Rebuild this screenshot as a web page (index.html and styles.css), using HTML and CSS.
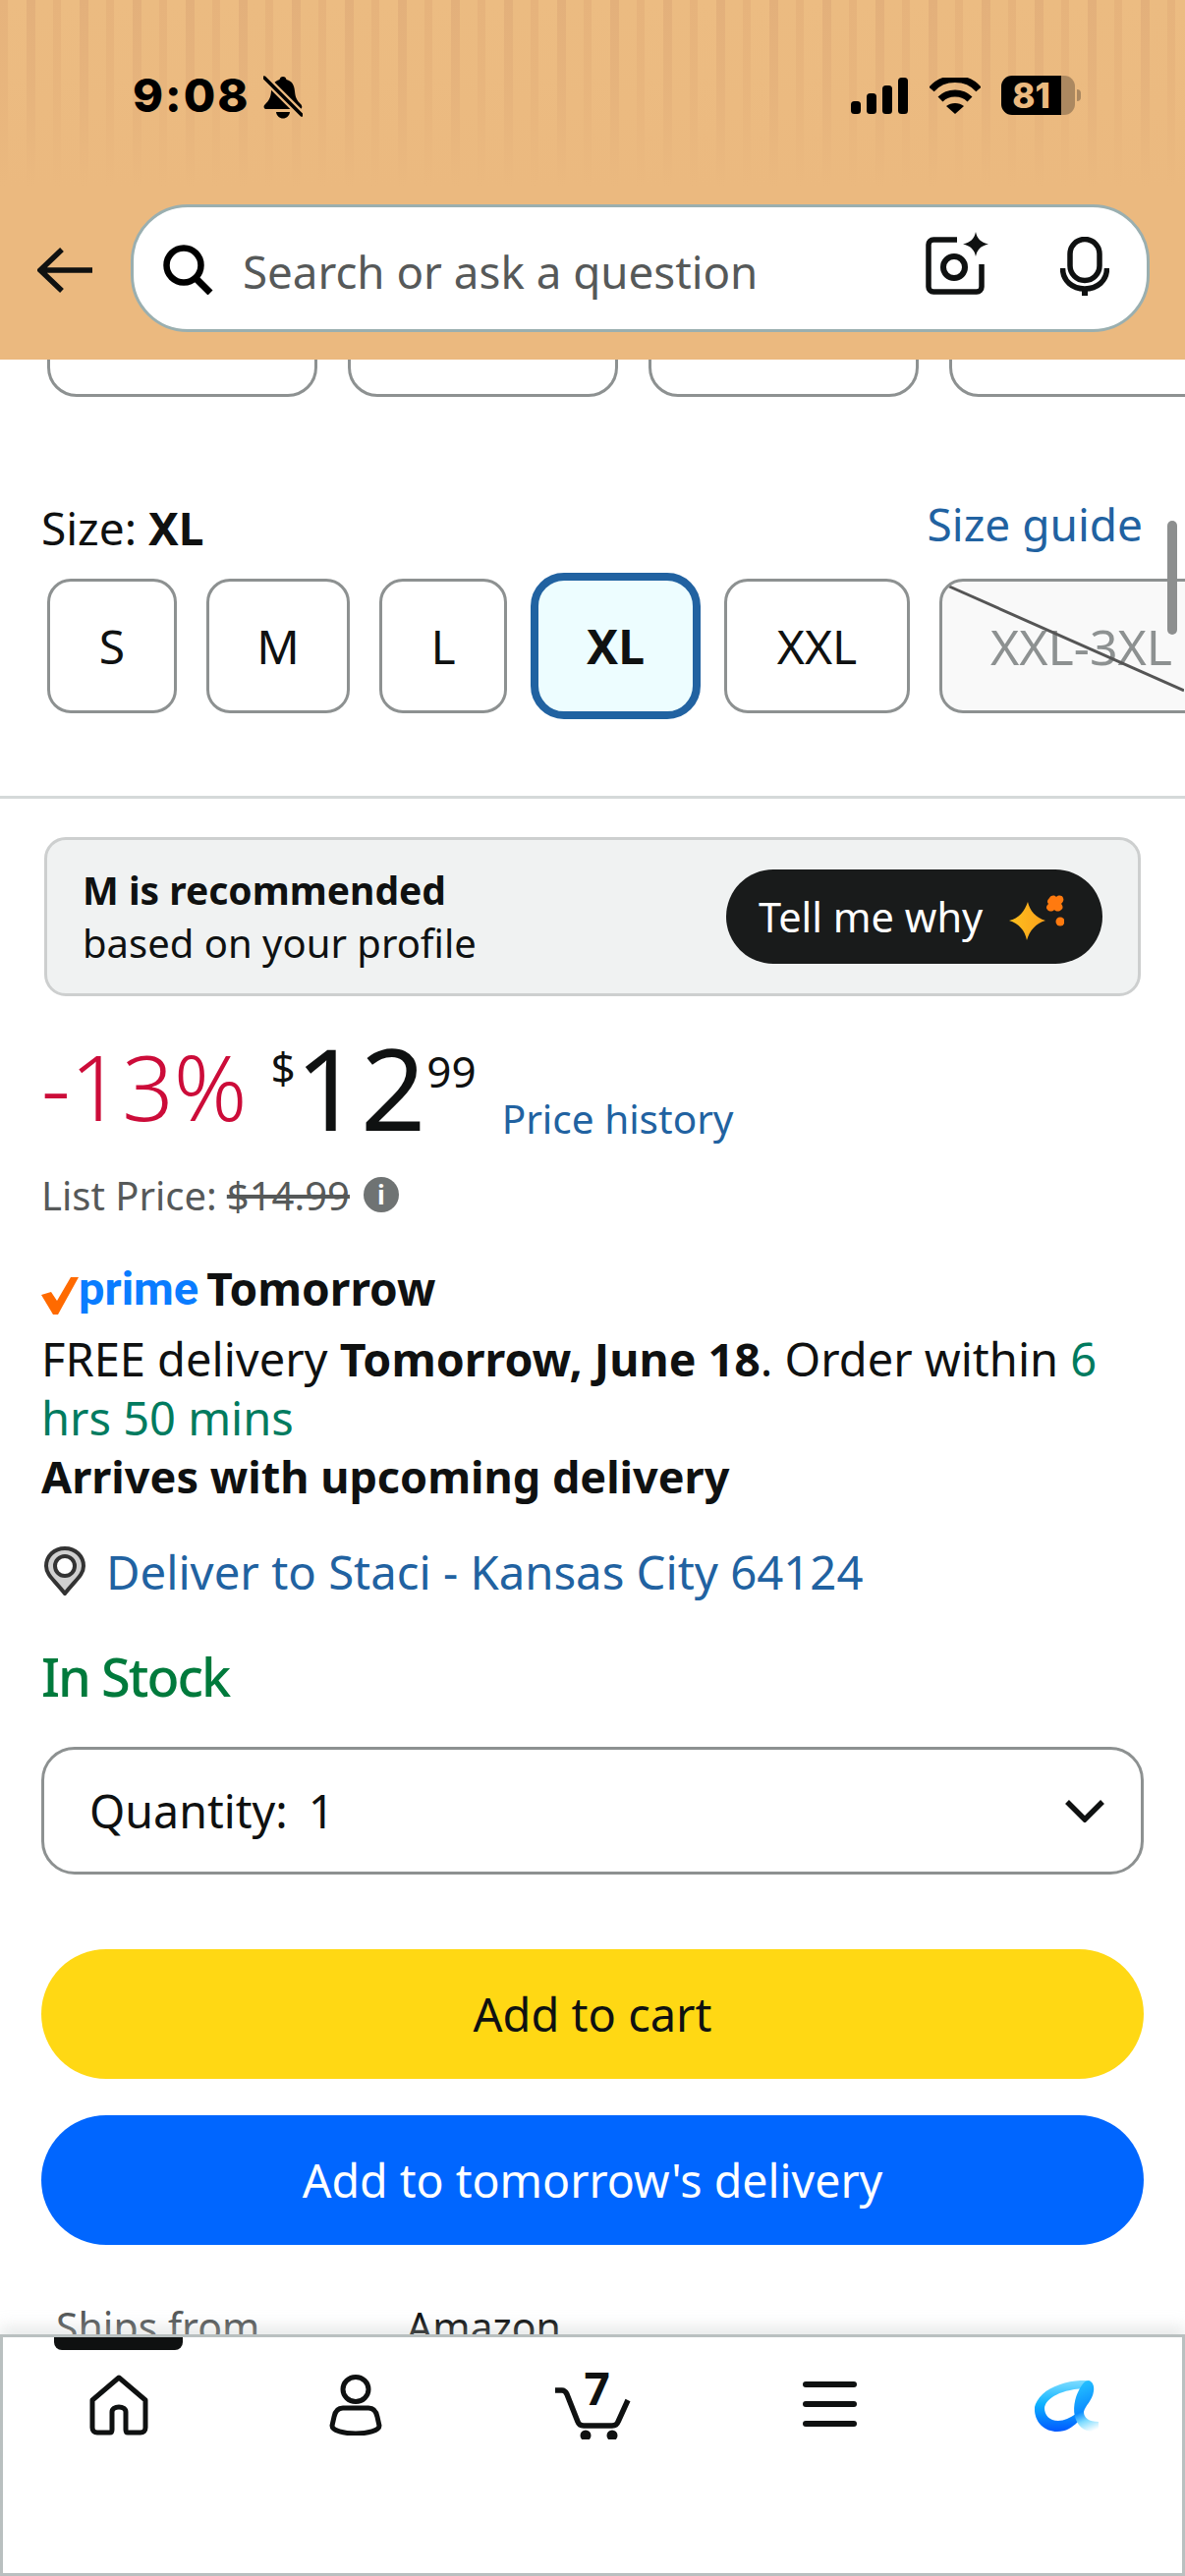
FILE: index.html
```html
<!DOCTYPE html>
<html lang="en">
<head>
<meta charset="utf-8">
<title>Product</title>
<link rel="stylesheet" href="styles.css">
</head>
<body>
<div class="phone">
  <header class="header">
    <div class="status">
      <div class="status-left">
        <span class="time">9:08</span>
        <svg class="bell" viewBox="0 0 40 44"><path d="M20 1c2 0 3 1 3.500 3 6 1.500 8 6 8.500 12 .5 6 2 9 6 13 1.500 1.500 2 4 0 5H2c-2-1-2-3.500 0-5 4-4 5.500-7 6-13 .5-6 3-10.500 8.500-12C17 2 18 1 20 1z"/><path d="M13 37h14c-.5 4-3.500 6.500-7 6.500S13.500 41 13 37z"/><path d="M0 1l40 40" stroke="#ebb97f" stroke-width="8"/><path d="M1 2l38 38" stroke="#000" stroke-width="3.500" stroke-linecap="round"/></svg>
      </div>
      <div class="status-right">
        <svg class="signal" viewBox="0 0 58 37"><rect x="0" y="24" width="10" height="13" rx="3.500"/><rect x="16" y="16" width="10" height="21" rx="3.500"/><rect x="32" y="8" width="10" height="29" rx="3.500"/><rect x="48" y="0" width="10" height="37" rx="3.500"/></svg>
        <svg class="wifi" viewBox="0 0 52 37"><path d="M2 12C14 -2 38 -2 50 12" fill="none" stroke="#000" stroke-width="7"/><path d="M11 22c8-8 22-8 30 0" fill="none" stroke="#000" stroke-width="7"/><path d="M17 29c5-4 13-4 18 0l-9 8z"/></svg>
        <div class="battery"><span class="battery-fill">81</span><span class="battery-rest"></span><span class="battery-nub"></span></div>
      </div>
    </div>
    <div class="searchrow">
      <svg class="back" viewBox="0 0 58 46"><path d="M56 23H4M25 2L3 23l22 21" fill="none" stroke="#0f1111" stroke-width="5.500"/></svg>
      <div class="search">
        <svg class="mag" viewBox="0 0 52 52"><circle cx="22" cy="22" r="17.500" fill="none" stroke="#000" stroke-width="6.500"/><path d="M33 34l16 16" stroke="#000" stroke-width="7"/></svg>
        <span class="placeholder">Search or ask a question</span>
        <svg class="cam" viewBox="0 0 64 64"><path d="M32 8H8a5 5 0 0 0-5 5v43a5 5 0 0 0 5 5h44a5 5 0 0 0 5-5V33" fill="none" stroke="#0f1111" stroke-width="5.500"/><circle cx="29" cy="36" r="11" fill="none" stroke="#0f1111" stroke-width="6"/><path d="M51 0c1.500 7 5 10.500 13 12.500-8 2-11.500 5.500-13 12.500-1.500-7-5-10.500-13-12.500C46 10.500 49.500 7 51 0z" fill="#0f1111"/></svg>
        <svg class="mic" viewBox="0 0 50 60"><rect x="10" y="2.500" width="30" height="42" rx="15" fill="none" stroke="#0f1111" stroke-width="5.500"/><path d="M2.500 32c0 13 10 21 22.500 21s22.500-8 22.500-21" fill="none" stroke="#0f1111" stroke-width="5.500"/><path d="M25 52v8" stroke="#0f1111" stroke-width="6"/></svg>
      </div>
    </div>
  </header>

  <main class="content">
    <div class="cutchips">
      <span class="cutchip"></span><span class="cutchip"></span><span class="cutchip"></span><span class="cutchip"></span>
    </div>

    <section class="sizes">
      <div class="size-head">
        <span class="size-label">Size: <b>XL</b></span>
        <span class="link size-guide">Size guide</span>
      </div>
      <div class="size-row">
        <span class="size size-s">S</span>
        <span class="size size-m">M</span>
        <span class="size size-l">L</span>
        <span class="size size-xl">XL</span>
        <span class="size size-xxl">XXL</span>
        <span class="size size-na">XXL-3XL<svg class="strike" viewBox="0 0 246 131"><path d="M5 4l241 107" stroke="#555" stroke-width="3"/></svg></span>
      </div>
    </section>
    <span class="scrollbar"></span>

    <section class="rec">
      <div class="rec-card">
        <div class="rec-text">
          <b>M is recommended</b>
          <span>based on your profile</span>
        </div>
        <div class="rec-pill">
          <span>Tell me why</span>
          <svg class="spark" viewBox="0 0 56 46"><defs><linearGradient id="sg" x1="0" x2="1"><stop offset="0" stop-color="#ffc01e"/><stop offset="1" stop-color="#f9a01b"/></linearGradient></defs><path d="M19 7C21 16 27 23 37 26 27 29 21 36 18 46 16 36 10 29 0 26 10 24 16 16 19 7z" fill="url(#sg)"/><path d="M41 3c2-3 5-3 7-1 2-2 6-2 7 1 1 2 0 4-2 6 2 2 2 5 0 6-2 2-5 2-7 0-2 2-5 2-7 0-2-2-1-4 1-6-2-2-1-4 1-6z" fill="#ff7a0f"/><circle cx="52" cy="27" r="4.500" fill="#ff7a0f"/></svg>
        </div>
      </div>
    </section>

    <section class="price">
      <div class="price-row">
        <span class="discount">-13%</span>
        <span class="cur">$</span>
        <span class="whole">12</span>
        <span class="cents">99</span>
        <span class="link price-history">Price history</span>
      </div>
      <div class="list-price">List Price: <s>$14.99</s><span class="info">i</span></div>
    </section>

    <section class="delivery">
      <div class="prime">
        <svg class="check" viewBox="0 0 38 38"><path d="M0 18l10-3 6 9L30 0h8L17 38H12z" fill="#ff6a00"/></svg>
        <span class="prime-word">prime</span>
        <b class="prime-when">Tomorrow</b>
      </div>
      <p class="deliv-text">FREE delivery <b>Tomorrow, June 18</b>. Order within <span class="green">6 hrs 50 mins</span></p>
      <p class="arrives"><b>Arrives with upcoming delivery</b></p>
      <div class="deliver-to">
        <svg class="pin" viewBox="0 0 42 50"><path d="M21 2c11 0 19 8 19 18 0 9-8 14-19 28C10 34 2 29 2 20 2 10 10 2 21 2z" fill="#d0d0d0" stroke="#333" stroke-width="4"/><circle cx="21" cy="20" r="10" fill="#fff" stroke="#333" stroke-width="4"/></svg>
        <span class="link">Deliver to Staci - Kansas City 64124</span>
      </div>
    </section>

    <div class="stock">In Stock</div>

    <div class="qty">
      <span class="qty-label"><span>Quantity:</span><span>1</span></span>
      <svg class="chev" viewBox="0 0 40 24"><path d="M2 3l18 18L38 3" fill="none" stroke="#0f1111" stroke-width="5.500"/></svg>
    </div>

    <div class="btn btn-cart">Add to cart</div>
    <div class="btn btn-tomorrow">Add to tomorrow's delivery</div>

    <div class="ships"><span class="ships-k">Ships from</span><span class="ships-v">Amazon</span></div>
  </main>

  <nav class="nav">
    <span class="nav-mark"></span>
    <div class="nav-item">
      <svg class="ic-home" viewBox="0 0 60 62"><path d="M30 3L3 26v28c0 3 2 5 5 5h13c2 0 2-1 2-3V38c0-3 3-5 7-5s7 2 7 5v18c0 2 0 3 2 3h13c3 0 5-2 5-5V26z" fill="none" stroke="#0f1111" stroke-width="5" stroke-linejoin="round"/></svg>
    </div>
    <div class="nav-item">
      <svg class="ic-user" viewBox="0 0 54 62"><ellipse cx="27" cy="15" rx="13" ry="12.500" fill="none" stroke="#0f1111" stroke-width="5"/><path d="M14 34h26c6 0 8 4 9 9l2 9c0 5-12 8-24 8S3 57 3 52l2-9c1-5 3-9 9-9z" fill="none" stroke="#0f1111" stroke-width="5"/></svg>
    </div>
    <div class="nav-item nav-cart">
      <svg class="ic-cart" viewBox="0 0 80 66"><path d="M2 16h7c3 0 4 2 5 4l11 28c1 3 3 4 6 4h29c3 0 5-1 6-4l10-22" fill="none" stroke="#0f1111" stroke-width="5.500"/><circle cx="33" cy="62" r="5.500" fill="#0f1111"/><circle cx="60" cy="62" r="5.500" fill="#0f1111"/></svg>
      <span class="cart-count">7</span>
    </div>
    <div class="nav-item">
      <div class="burger"><i></i><i></i><i></i></div>
    </div>
    <div class="nav-item">
      <svg class="ic-logo" viewBox="0 0 65 53"><defs><linearGradient id="lg" x1="0.400" y1="0" x2="0.400" y2="1"><stop offset="0" stop-color="#7fdcff"/><stop offset="0.450" stop-color="#0fb4ff"/><stop offset="1" stop-color="#0058ff"/></linearGradient><linearGradient id="lh" x1="0.500" y1="0" x2="0.700" y2="1"><stop offset="0" stop-color="#25c0ff"/><stop offset="0.550" stop-color="#0a8cff"/><stop offset="0.750" stop-color="#7fdcff"/><stop offset="1" stop-color="#fff"/></linearGradient></defs><path d="M54 0C40-1 18 4 8 14 2 20-1 26 0 31c1 12 10 21 23 21 9 0 15-4 21-10l-2-8c-6 4-12 7-18 7-9 0-14-6-14-13C11 20 22 10 50 8z" fill="url(#lg)"/><path d="M55 0c4 1 6 6 5 11-1 9-9 15-10 21 0 6 5 10 15 10v10c-10 1-19-2-23-12-4-10-1-23 3-30 3-6 6-10 10-10z" fill="url(#lh)"/></svg>
    </div>
  </nav>
</div>
</body>
</html>
```
FILE: styles.css
```css
* { box-sizing: border-box; }
html, body { margin: 0; padding: 0; }
body { width: 1206px; height: 2622px; overflow: hidden; background: #fff; font-family: "Noto Sans", "Liberation Sans", sans-serif; color: #0f1111; }
b { font-weight: 700; }
svg { display: block; flex: none; }
p { margin: 0; }

.phone { width: 1206px; height: 2622px; display: flex; flex-direction: column; overflow: hidden; }

.header { height: 366px; flex: none; padding-top: 77px;
  background:
    linear-gradient(to bottom, rgba(235,185,127,0) 0, rgba(235,185,127,0.4) 90px, #ebb97f 190px),
    repeating-linear-gradient(to right, #e6b37c 0 8px, #ecbc82 8px 27px, #e3b07b 27px 36px, #ebbb81 36px 54px);
}
.status { display: flex; justify-content: space-between; align-items: flex-start; height: 43px; padding: 0 106px 0 135px; }
.status-left { display: flex; align-items: flex-start; gap: 14px; }
.time { font-family: Inter, "Liberation Sans", sans-serif; font-weight: 800; font-size: 47px; line-height: 40px; letter-spacing: 2px; color: #000; }
.bell { width: 40px; height: 44px; }
.status-right { display: flex; align-items: flex-start; }
.signal { width: 58px; height: 37px; margin-top: 2px; margin-right: 22px; }
.wifi { width: 52px; height: 37px; margin-top: 2px; margin-right: 21px; }
.battery { display: flex; align-items: center; height: 40px; }
.battery-fill { width: 61px; height: 40px; background: #000; color: #ebb97f; border-radius: 11px 0 0 11px; font: 800 35px/40px Inter, "Liberation Sans", sans-serif; text-align: center; }
.battery-rest { width: 14px; height: 40px; background: #ab8860; border-radius: 0 11px 11px 0; }
.battery-nub { width: 4px; height: 12px; margin-left: 2px; background: #ab8860; border-radius: 0 4px 4px 0; }

.searchrow { display: flex; align-items: center; margin-top: 88px; padding-left: 38px; }
.back { width: 58px; height: 46px; margin-right: 37px; margin-top: 4px; }
.search { width: 1037px; height: 130px; flex: none; background: #fff; border: 3px solid #9aafb0; border-radius: 58px; display: flex; align-items: center; padding-left: 29px; }
.mag { width: 52px; height: 52px; margin-top: 2px; }
.placeholder { font-size: 45.700px; color: #565959; margin-left: 30px; width: 695px; margin-top: 6px; }
.cam { width: 64px; height: 64px; margin-top: -10px; }
.mic { width: 50px; height: 60px; margin-left: 73px; margin-top: -4px; }

.content { flex: 1; min-height: 0; overflow: hidden; position: relative; }
.cutchips { display: flex; gap: 31px; padding-left: 48px; height: 38px; overflow: hidden; }
.cutchip { flex: none; width: 275px; height: 100px; margin-top: -62px; border: 3px solid #8d9191; border-radius: 30px; }

.link { color: #2162a1; }
.sizes { border-bottom: 3px solid #d5d9d9; height: 409px; }
.size-head { display: flex; justify-content: space-between; align-items: flex-end; padding: 0 43px 16px 42px; height: 179px; line-height: 60px; }
.size-label { font-size: 46px; }
.size-guide { font-size: 46px; margin-bottom: 4px; }
.size-row { display: flex; align-items: center; padding-left: 48px; height: 149px; }
.size { flex: none; height: 137px; border: 3px solid #8d9191; border-radius: 24px; display: flex; align-items: center; justify-content: center; font-size: 48px; }
.size-s { width: 132px; margin-right: 30px; }
.size-m { width: 146px; margin-right: 30px; }
.size-l { width: 130px; margin-right: 24px; }
.size-xl { width: 173px; height: 149px; margin-right: 24px; border: 8px solid #2162a1; border-radius: 34px; background: #edfdff; font-weight: 700; }
.size-xxl { width: 189px; margin-right: 30px; }
.size-na { width: 300px; background: #f9f9f9; color: #8d9191; justify-content: flex-start; padding-left: 49px; position: relative; overflow: hidden; font-size: 50px; }
.strike { position: absolute; left: 0; top: 0; width: 246px; height: 131px; }
.scrollbar { position: absolute; left: 1188px; top: 164px; width: 10px; height: 116px; background: #8d8f8f; border-radius: 5px; }

.rec { padding: 39px 45px 0; }
.rec-card { height: 162px; background: #f0f2f2; border: 3px solid #cdcfcf; border-radius: 22px; display: flex; align-items: center; justify-content: space-between; padding: 0 36px 0 36px; }
.rec-text { display: flex; flex-direction: column; font-size: 40px; line-height: 54px; }
.rec-text b { font-size: 39px; }
.rec-pill { width: 383px; height: 96px; background: #191b1b; border-radius: 48px; color: #fff; font-size: 41.500px; display: flex; align-items: center; padding-left: 33px; gap: 27px; }
.spark { width: 56px; height: 46px; margin-top: 2px; }

.price { padding: 0 42px; }
.price-row { display: flex; align-items: flex-start; height: 142px; margin-top: 26px; }
.discount { font-size: 92px; font-weight: 300; color: #cc0c39; line-height: 92px; margin-top: 20px; }
.cur { font-size: 44px; line-height: 44px; margin-top: 24px; margin-left: 24px; }
.whole { font-size: 116px; line-height: 116px; margin-top: 8px; }
.cents { font-size: 44px; line-height: 44px; margin-top: 28px; margin-left: 1px; }
.price-history { font-size: 40.500px; line-height: 41px; margin-top: 78px; margin-left: 26px; }
.list-price { font-size: 40px; color: #565959; display: flex; align-items: center; height: 52px; margin-top: 8px; }
.list-price s { margin-left: 10px; }
.info { width: 36px; height: 36px; border-radius: 50%; background: #6f7373; color: #fff; font-size: 26px; font-weight: 700; line-height: 36px; text-align: center; margin-left: 14px; }

.delivery { padding: 0 42px; }
.prime { display: flex; align-items: center; height: 64px; margin-top: 37px; }
.check { width: 38px; height: 38px; margin-top: 16px; }
.prime-word { color: #0a7cff; font-weight: 700; font-size: 47px; font-family: Roboto, "Noto Sans", sans-serif; }
.prime-when { font-size: 46px; margin-left: 8px; }
.deliv-text { font-size: 47px; line-height: 60px; margin-top: 10px; }
.deliv-text b { font-size: 46.500px; }
.arrives { font-size: 45px; line-height: 60px; }
.green { color: #007b5f; }
.deliver-to { display: flex; align-items: center; gap: 21px; font-size: 47.300px; height: 60px; margin-top: 36px; padding-left: 3px; }
.pin { width: 42px; height: 50px; }

.stock { font-size: 54px; font-weight: 500; color: #007a3c; letter-spacing: -2px; padding-left: 42px; height: 74px; line-height: 74px; margin-top: 40px; }
.qty { margin: 35px 42px 0 42px; height: 130px; border: 3px solid #8d9191; border-radius: 34px; display: flex; align-items: center; justify-content: space-between; font-size: 46.500px; padding: 0 37px 0 46px; }
.qty-label { display: flex; gap: 21px; }
.chev { width: 40px; height: 24px; }
.btn { margin: 0 42px; height: 132px; border-radius: 66px; display: flex; align-items: center; justify-content: center; }
.btn-cart { background: #ffd814; margin-top: 76px; font-size: 47px; }
.btn-tomorrow { background: #0066ff; color: #fff; margin-top: 37px; font-size: 46.500px; }
.ships { display: flex; font-size: 41px; line-height: 60px; margin-top: 53px; padding-left: 57px; }
.ships-k { color: #565959; width: 357px; }

.nav { flex: none; height: 246px; border: 3px solid #b9c0c0; background: #fff; box-shadow: 0 -8px 14px rgba(190,195,195,0.35); display: grid; grid-template-columns: repeat(5, 241px); justify-content: center; align-items: start; position: relative; }
.nav-mark { position: absolute; left: 52px; top: 0; width: 131px; height: 13px; background: #0f1111; border-radius: 0 0 8px 8px; }
.nav-item { display: flex; justify-content: center; padding-top: 38px; position: relative; }
.ic-home { width: 60px; height: 62px; }
.ic-user { width: 54px; height: 62px; }
.ic-cart { width: 80px; height: 66px; }
.cart-count { position: absolute; left: 112px; top: 26px; font-size: 46px; font-weight: 700; line-height: 50px; color: #0f1111; }
.burger { width: 55px; height: 46px; display: flex; flex-direction: column; justify-content: space-between; margin-top: 7px; }
.burger i { display: block; height: 6px; background: #0f1111; border-radius: 3px; }
.ic-logo { width: 65px; height: 53px; margin-top: 6px; }
```
